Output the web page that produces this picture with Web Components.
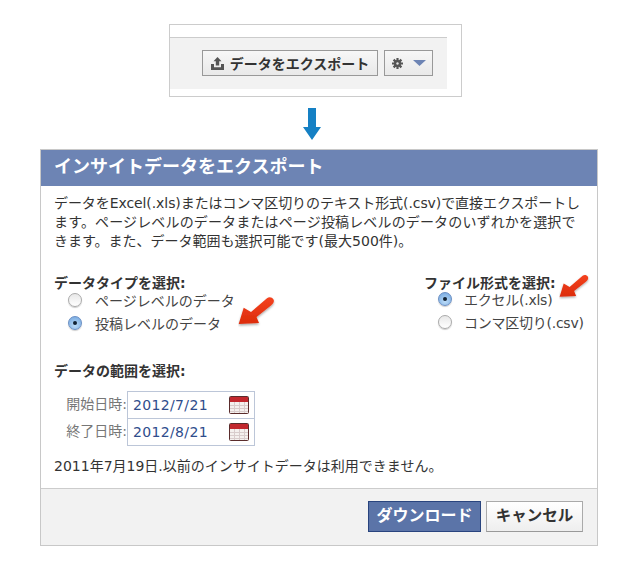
<!DOCTYPE html>
<html lang="ja">
<head>
<meta charset="utf-8">
<title>インサイトデータをエクスポート</title>
<style>
    html, body { margin: 0; background: #fff; }
    body {
        width: 636px;
        height: 564px;
        overflow: hidden;
        font-family: "DejaVu Sans", "Noto Sans CJK JP", sans-serif;
        font-size: 14px;
        color: #333;
    }
</style>
</head>
<body>
<export-page></export-page>

<script>
    const ICONS = {
        upload: `<svg width="13" height="13" viewBox="0 0 13 13"><path fill="#555" d="M6.5 0 10.5 4.2H8.2V8.5H4.8V4.2H2.5z"/><path fill="#555" d="M0 7h3v3.3h7V7h3v6H0z"/></svg>`,
        gear: `<svg width="11" height="11" viewBox="0 0 11 11"><path stroke="#555" stroke-width="2.2" fill="none" d="M5.5 0v11M0 5.5h11M1.6 1.6l7.8 7.8M9.4 1.6l-7.8 7.8"/><circle cx="5.5" cy="5.5" r="3.5" fill="#555"/><circle cx="5.5" cy="5.5" r="1.2" fill="#e4e4e4"/></svg>`,
        caret: `<svg class="caret" width="13" height="6" viewBox="0 0 13 6"><path fill="#6d84b4" d="M0 0h13L6.5 6z"/></svg>`,
        down: `<svg width="18" height="32" viewBox="0 0 18 32"><path fill="#1580c4" d="M5 0h8v19h5L9 32 0 19h5z"/></svg>`,
        cal: `<svg width="20" height="18" viewBox="0 0 20 18"><rect x=".5" y=".5" width="19" height="17" rx="1" fill="#f4f0ee" stroke="#5a2c2c"/><rect x="1" y="1" width="18" height="5" fill="#c2282e"/><path stroke="#d8cccc" fill="none" d="M1 9.5h18M1 12.5h18M1 15.5h18M5.5 6v11M10.5 6v11M15.5 6v11"/></svg>`,
        red: `<svg width="38" height="32" viewBox="0 0 38 32"><defs><linearGradient id="r" x1="0" y1="0" x2="0" y2="1"><stop offset="0" stop-color="#f4421e"/><stop offset="1" stop-color="#dc2c0c"/></linearGradient><filter id="s" x="-20%" y="-20%" width="140%" height="150%"><feDropShadow dx="0" dy="1.5" stdDeviation="1.2" flood-color="#000" flood-opacity=".35"/></filter></defs><path fill="url(#r)" filter="url(#s)" d="M.7 28 5.7 11.8 13 16 29 2.3C31 .5 34 1 35.5 3.5 36.5 5.5 35.5 7.5 33 9.5L18.5 21 21 27z"/></svg>`
    };

    class ExportButton extends HTMLElement {
        constructor() {
            super();
            this.attachShadow({ mode: 'open' });
            this.shadowRoot.innerHTML = `
                <style>
                    :host { display: inline-flex; }
                    .btn {
                        display: flex;
                        align-items: center;
                        justify-content: center;
                        box-sizing: border-box;
                        height: 26px;
                        width: 100%;
                        gap: 6px;
                        border: 1px solid #999;
                        background: linear-gradient(#f7f7f7, #e9e9e9);
                        font-weight: bold;
                        font-size: 14px;
                        color: #333;
                        white-space: nowrap;
                    }
                </style>
                <div class="btn"><slot></slot></div>
            `;
        }
    }

    class RadioOption extends HTMLElement {
        constructor() {
            super();
            this.attachShadow({ mode: 'open' });
        }

        connectedCallback() {
            const on = this.hasAttribute('checked');
            this.shadowRoot.innerHTML = `
                <style>
                    :host { display: flex; align-items: center; gap: 13px; height: 23px; color: #444; white-space: nowrap; }
                    .dot {
                        box-sizing: border-box;
                        width: 14px;
                        height: 14px;
                        border-radius: 50%;
                        flex: none;
                        display: flex;
                        align-items: center;
                        justify-content: center;
                        border: 1px solid ${on ? '#6a8fc4' : '#aaa'};
                        background: ${on ? 'radial-gradient(circle at 50% 70%, #bcdcf8, #6fa4de)' : 'linear-gradient(#e8e8e8, #fff)'};
                        box-shadow: 0 1px 1px rgba(0,0,0,.2);
                    }
                    .dot i { width: 4px; height: 4px; border-radius: 50%; background: #123; display: ${on ? 'block' : 'none'}; }
                </style>
                <span class="dot"><i></i></span><span><slot></slot></span>
            `;
        }
    }

    class DateField extends HTMLElement {
        constructor() {
            super();
            this.attachShadow({ mode: 'open' });
        }

        connectedCallback() {
            const label = this.getAttribute('label');
            const value = this.getAttribute('value');
            this.shadowRoot.innerHTML = `
                <style>
                    :host { display: flex; align-items: stretch; height: 27px; }
                    .label { width: 73px; text-align: right; color: #777; line-height: 27px; white-space: nowrap; }
                    .box {
                        box-sizing: border-box;
                        width: 128px;
                        display: flex;
                        align-items: center;
                        justify-content: space-between;
                        padding: 0 5px;
                        border: 1px solid #bcc6d8;
                        margin-bottom: -1px;
                        height: 28px;
                        color: #2f4d8c;
                        letter-spacing: .35px;
                    }
                    svg { display: block; }
                </style>
                <span class="label">${label}</span>
                <div class="box"><span>${value}</span>${ICONS.cal}</div>
            `;
        }
    }

    class ExportDialog extends HTMLElement {
        constructor() {
            super();
            this.attachShadow({ mode: 'open' });
            this.shadowRoot.innerHTML = `
                <style>
                    :host {
                        display: block;
                        box-sizing: border-box;
                        width: 558px;
                        height: 397px;
                        margin-left: 40px;
                        border: 1px solid #c8c8c8;
                        position: relative;
                    }
                    .head {
                        height: 36px;
                        line-height: 33px;
                        padding-left: 13px;
                        background: #6d84b4;
                        color: #fff;
                        font-size: 18px;
                        font-weight: bold;
                    }
                    .body { height: 302px; padding: 0 13px; box-sizing: border-box; }
                    .intro { margin: 0; padding-top: 8px; line-height: 19px; height: 78px; color: #333; white-space: nowrap; }
                    .choices { display: flex; justify-content: space-between; padding-top: 2px; height: 85px; }
                    h4 { margin: 0; font-size: 14px; line-height: 18px; color: #333; }
                    .left h4 { margin-bottom: -4px; }
                    .right h4 { margin-bottom: -5px; }
                    .left radio-option, .right radio-option { margin-left: 14px; }
                    .right { width: 160px; }
                    .right radio-option { gap: 12px; letter-spacing: -.25px; }
                    .range { padding-top: 3px; }
                    .fields { margin-top: 11px; }
                    .note { margin: 12px 0 0; line-height: 18px; color: #333; }
                    .foot {
                        display: flex;
                        justify-content: flex-end;
                        align-items: center;
                        gap: 5px;
                        box-sizing: border-box;
                        height: 57px;
                        padding: 0 14px 1px 0;
                        background: #f2f2f2;
                        border-top: 1px solid #ccc;
                    }
                    .foot span {
                        box-sizing: border-box;
                        height: 31px;
                        line-height: 28px;
                        text-align: center;
                        font-weight: bold;
                    }
                    .ok { width: 113px; font-size: 16px; background: #5b74a8; border: 1px solid #29447e; color: #fff; }
                    .no { width: 97px; font-size: 15.5px; background: linear-gradient(#fff, #eee); border: 1px solid #aaa; border-bottom-color: #999; color: #333; }
                    .pin { position: absolute; }
                    .pin svg { display: block; }
                    .pin.small svg { width: 31px; height: 26px; }
                </style>
                <div class="head"><slot name="title"></slot></div>
                <div class="body">
                    <p class="intro"><slot name="intro"></slot></p>
                    <div class="choices">
                        <div class="left">
                            <h4>データタイプを選択:</h4>
                            <radio-option>ページレベルのデータ</radio-option>
                            <radio-option checked>投稿レベルのデータ</radio-option>
                        </div>
                        <div class="right">
                            <h4>ファイル形式を選択:</h4>
                            <radio-option checked>エクセル(.xls)</radio-option>
                            <radio-option>コンマ区切り(.csv)</radio-option>
                        </div>
                    </div>
                    <div class="range">
                        <h4>データの範囲を選択:</h4>
                        <div class="fields">
                            <date-field label="開始日時:" value="2012/7/21"></date-field>
                            <date-field label="終了日時:" value="2012/8/21"></date-field>
                        </div>
                    </div>
                    <p class="note">2011年7月19日.以前のインサイトデータは利用できません。</p>
                </div>
                <div class="foot"><span class="ok">ダウンロード</span><span class="no">キャンセル</span></div>
                <span class="pin" style="left:197px;top:146px">${ICONS.red}</span>
                <span class="pin small" style="left:518px;top:124px">${ICONS.red}</span>
            `;
        }
    }

    class ExportPage extends HTMLElement {
        constructor() {
            super();
            this.attachShadow({ mode: 'open' });
            this.shadowRoot.innerHTML = `
                <style>
                    :host { display: block; padding-top: 24px; }
                    .top {
                        box-sizing: border-box;
                        width: 293px;
                        height: 73px;
                        margin-left: 169px;
                        padding-top: 12px;
                        border: 1px solid #ccc;
                    }
                    .bar {
                        box-sizing: border-box;
                        width: 277px;
                        height: 52px;
                        padding: 12px 0 0 32px;
                        background: #f2f2f2;
                        border-top: 1px solid #ccc;
                        display: flex;
                        gap: 6px;
                    }
                    .bar export-button:first-child { width: 176px; }
                    .bar export-button:last-child { width: 49px; }
                    .caret { margin-left: 4px; }
                    .arrow { display: flex; justify-content: center; padding: 11px 0 9px; margin-left: -12px; height: 32px; }
                    svg { display: block; }
                </style>
                <div class="top">
                    <div class="bar">
                        <export-button>${ICONS.upload}<span>データをエクスポート</span></export-button>
                        <export-button>${ICONS.gear}${ICONS.caret}</export-button>
                    </div>
                </div>
                <div class="arrow">${ICONS.down}</div>
                <export-dialog>
                    <span slot="title">インサイトデータをエクスポート</span>
                    <span slot="intro"><span style="letter-spacing:-.08px">データをExcel(.xls)またはコンマ区切りのテキスト形式(.csv)で直接エクスポートし</span><br><span style="letter-spacing:.15px">ます。ページレベルのデータまたはページ投稿レベルのデータのいずれかを選択で</span><br>きます。また、データ範囲も選択可能です(最大500件)。</span>
                </export-dialog>
            `;
        }
    }

    customElements.define('export-button', ExportButton);
    customElements.define('radio-option', RadioOption);
    customElements.define('date-field', DateField);
    customElements.define('export-dialog', ExportDialog);
    customElements.define('export-page', ExportPage);
</script>
</body>
</html>
